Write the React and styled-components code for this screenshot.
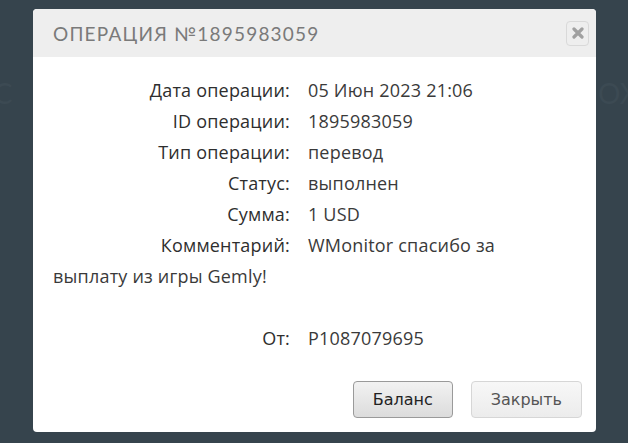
import React from "react";
import styled, { createGlobalStyle } from "styled-components";

const GlobalStyle = createGlobalStyle`
  html, body {
    margin: 0;
    padding: 0;
    background: #36444d;
    font-family: "Open Sans", "Liberation Sans", sans-serif;
  }
`;

const Page = styled.div`
  width: 628px;
  height: 443px;
  position: relative;
  overflow: hidden;
  display: flex;
  justify-content: center;
  padding-top: 9px;
  box-sizing: border-box;
`;

const GhostText = styled.span`
  position: absolute;
  top: 76px;
  font-size: 28px;
  color: #3c4a53;
  font-family: "Lato", sans-serif;
  left: ${(p) => p.left}px;
`;

const Modal = styled.div`
  position: relative;
  width: 563px;
  height: 423px;
  margin-left: 1px;
  background: #fff;
  border-radius: 4px;
  overflow: hidden;
  display: flex;
  flex-direction: column;
`;

const Header = styled.div`
  height: 48px;
  background: #eeeeee;
  display: flex;
  align-items: center;
  justify-content: space-between;
  padding: 0 7px 0 20px;
`;

const Title = styled.h3`
  margin: 0;
  font-family: "Lato", sans-serif;
  font-weight: 400;
  font-size: 19px;
  letter-spacing: 1.2px;
  color: #7a7a7a;
`;

const CloseBtn = styled.button`
  width: 23px;
  height: 25px;
  padding: 0;
  border: 1px solid #d9d9d9;
  border-radius: 4px;
  background: #eeeeee;
  display: flex;
  align-items: center;
  justify-content: center;
`;

const Body = styled.div`
  flex: 1;
  padding: 18px 40px 0 20px;
  font-size: 18px;
  letter-spacing: 0.2px;
  line-height: 31px;
  color: #333;
`;

const Row = styled.div``;

const Label = styled.span`
  display: inline-block;
  width: 237px;
  text-align: right;
  margin-right: 18px;
  color: #2e2e2e;
`;

const Value = styled.span`
  color: #3a3a3a;
`;

const Footer = styled.div`
  display: flex;
  justify-content: flex-end;
  gap: 18px;
  padding: 0 14px 14px 0;
`;

const Button = styled.button`
  height: 37px;
  padding: 0 19px;
  border-radius: 4px;
  font-family: "DejaVu Sans", sans-serif;
  font-size: 16px;
  border: 1px solid ${(p) => (p.primary ? "#9a9a9a" : "#d6d6d6")};
  color: ${(p) => (p.primary ? "#222" : "#555")};
  background: ${(p) =>
    p.primary
      ? "linear-gradient(#f2f2f2, #dcdcdc)"
      : "linear-gradient(#f7f7f7, #ececec)"};
`;

const rows = [
  ["Дата операции:", "05 Июн 2023 21:06"],
  ["ID операции:", "1895983059"],
  ["Тип операции:", "перевод"],
  ["Статус:", "выполнен"],
  ["Сумма:", "1 USD"],
  ["Комментарий:", "WMonitor спасибо за выплату из игры Gemly!"],
];

export default function App() {
  return (
    <>
      <GlobalStyle />
      <Page>
        <GhostText left={-14}>IC</GhostText>
        <GhostText left={598}>ОХ</GhostText>
        <Modal>
          <Header>
            <Title>ОПЕРАЦИЯ №1895983059</Title>
            <CloseBtn>
              <svg width="12" height="12" viewBox="0 0 12 12">
                <path
                  d="M2 2 L10 10 M10 2 L2 10"
                  stroke="#a0a0a0"
                  strokeWidth="3.2"
                  strokeLinecap="round"
                />
              </svg>
            </CloseBtn>
          </Header>
          <Body>
            {rows.map(([label, value]) => (
              <Row key={label}>
                <Label>{label}</Label>
                <Value>{value}</Value>
              </Row>
            ))}
            <br />
            <Row>
              <Label>От:</Label>
              <Value>P1087079695</Value>
            </Row>
          </Body>
          <Footer>
            <Button primary>Баланс</Button>
            <Button>Закрыть</Button>
          </Footer>
        </Modal>
      </Page>
    </>
  );
}
